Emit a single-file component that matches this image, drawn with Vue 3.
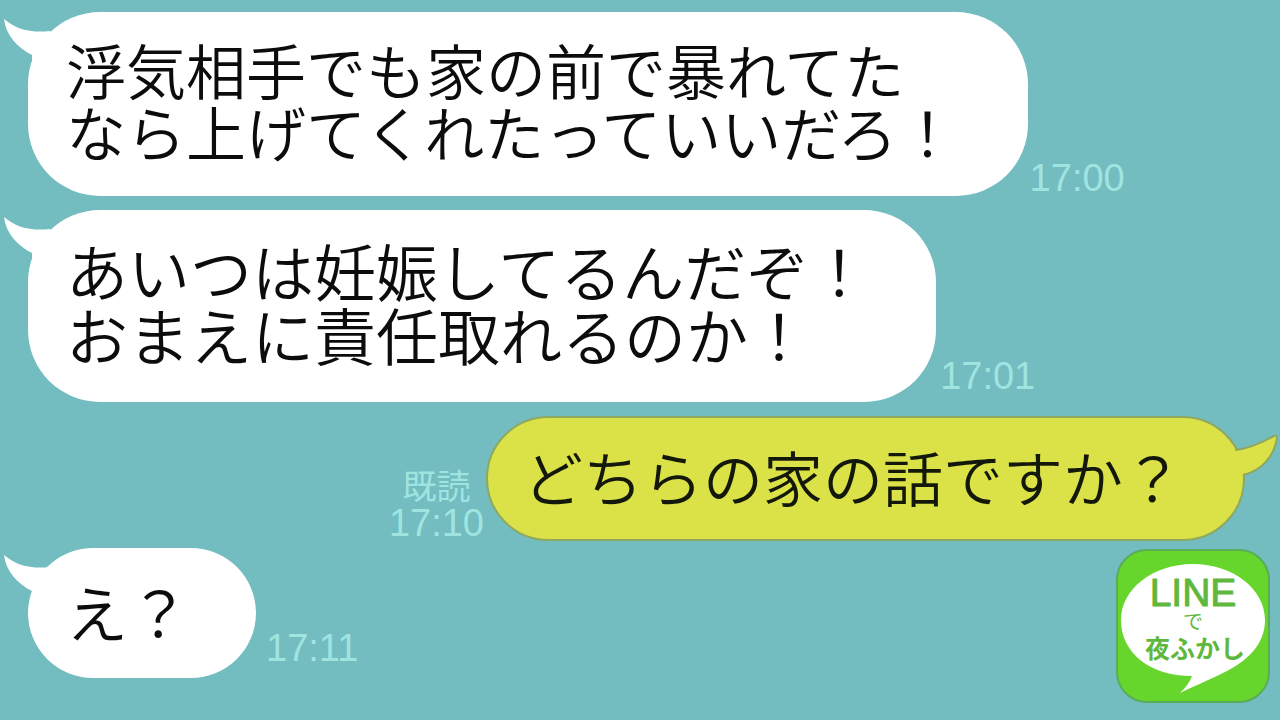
<script setup>
const messages = [
  { id: 1, side: 'in', size: 'md', lines: ['浮気相手でも家の前で暴れてた', 'なら上げてくれたっていいだろ！'], time: '17:00' },
  { id: 2, side: 'in', size: 'lg', lines: ['あいつは妊娠してるんだぞ！', 'おまえに責任取れるのか！'], time: '17:01' },
  { id: 3, side: 'out', size: 'md', lines: ['どちらの家の話ですか？'], time: '17:10', read: '既読' },
  { id: 4, side: 'in', size: 'lg', lines: ['え？'], time: '17:11', logo: true },
]
</script>

<template>
  <main class="chat">
    <article v-for="m in messages" :key="m.id" class="row" :class="[m.side, m.size, m.lines.length === 1 ? 'single' : 'double']">
      <div class="bubble">
        <svg v-if="m.side === 'in'" class="tail" width="60" height="52" viewBox="0 0 60 52" aria-hidden="true">
          <path d="M2 3 C15 14 30 17 48 15 L58 30 L30 50 L30 39 C16 32 4 20 2 3Z" fill="#fff" />
        </svg>
        <svg v-else class="tail" width="60" height="52" viewBox="0 0 60 52" aria-hidden="true">
          <path d="M16 22 C29 21 42 15 55 8 C57 7 58 8 58 10 C55 29 42 43 24 47 L22 52 L4 36Z" fill="#dae247" />
          <path d="M16 22 C29 21 42 15 55 8 C57 7 58 8 58 10 C55 29 42 43 24 47" fill="none" stroke="#8fa860" stroke-width="2" />
        </svg>
        <p v-for="line in m.lines" :key="line" class="line">{{ line }}</p>
      </div>
      <div class="meta">
        <span v-if="m.read" class="read">{{ m.read }}</span>
        <time>{{ m.time }}</time>
      </div>
      <svg v-if="m.logo" class="logo" width="154" height="154" viewBox="0 0 154 154" role="img" aria-label="LINEで夜ふかし">
        <rect x="1" y="1" width="152" height="152" rx="30" fill="#67d62c" stroke="#58ad58" stroke-width="2" />
        <path d="M77 15 C117 15 149 40 149 71 C149 95 132 112 107 124 C95 130 81 136 64 144 C70 138 74 133 76 127 C34 127 5 104 5 71 C5 40 37 15 77 15Z" fill="#fff" />
        <g fill="#5fb83e" text-anchor="middle">
          <text class="brand" x="77" y="57">LINE</text>
          <text class="de" x="77" y="80">で</text>
          <text class="night" x="79" y="109">夜ふかし</text>
        </g>
      </svg>
    </article>
  </main>
</template>

<style>
body {
  margin: 0;
  background: #73bcc0;
}
</style>

<style scoped>
.chat {
  min-height: 100vh;
  box-sizing: border-box;
  padding: 12px 10px 16px 28px;
  display: flex;
  flex-direction: column;
  gap: 7px;
  background: #73bcc0;
  font-family: "Noto Sans CJK JP", sans-serif;
}
.row {
  display: flex;
  align-items: flex-end;
  white-space: nowrap;
}
.double {
  margin-bottom: 7px;
}
.bubble {
  position: relative;
  box-sizing: border-box;
  padding: 26px 62px 34px 38px;
  border-radius: 72px;
  background: #fff;
  color: #0c0c0c;
  font-size: 60px;
  font-weight: 350;
  line-height: 62px;
}
.double.md .bubble {
  padding-right: 70px;
}
.lg .bubble {
  padding: 28px 66px 36px 38px;
  font-size: 62px;
  line-height: 64px;
}
.single.lg .bubble {
  padding-top: 31px;
  padding-bottom: 35px;
}
.out {
  flex-direction: row-reverse;
  padding-right: 25px;
}
.out .bubble {
  padding: 27px 60px 32px 35px;
  border: 2px solid #8fa860;
  background: #dae247;
  color: #14180a;
}
.line {
  margin: 0;
}
.tail {
  position: absolute;
  top: 4px;
  left: -26px;
}
.out .tail {
  top: 10px;
  left: auto;
  right: -36px;
}
.meta {
  display: flex;
  flex-direction: column;
  align-items: center;
  color: #a0e4e0;
  font-family: "Liberation Sans", "Noto Sans CJK JP", sans-serif;
  font-size: 38px;
  line-height: 36px;
}
.in .meta {
  padding-left: 2px;
}
.double.lg .meta {
  padding: 0 0 8px 4px;
}
.out .meta {
  padding-right: 2px;
}
.single.in .meta {
  padding: 0 0 12px 10px;
}
.read {
  font-size: 34px;
}
.logo {
  margin: 0 0 -25px auto;
}
.brand {
  font: 400 39px "Liberation Sans", sans-serif;
  stroke: #5fb83e;
  stroke-width: 1px;
  stroke-linejoin: round;
}
.de {
  font: 400 20px "Noto Sans CJK JP", sans-serif;
}
.night {
  font: 700 25px "Noto Sans CJK JP", sans-serif;
}
</style>
